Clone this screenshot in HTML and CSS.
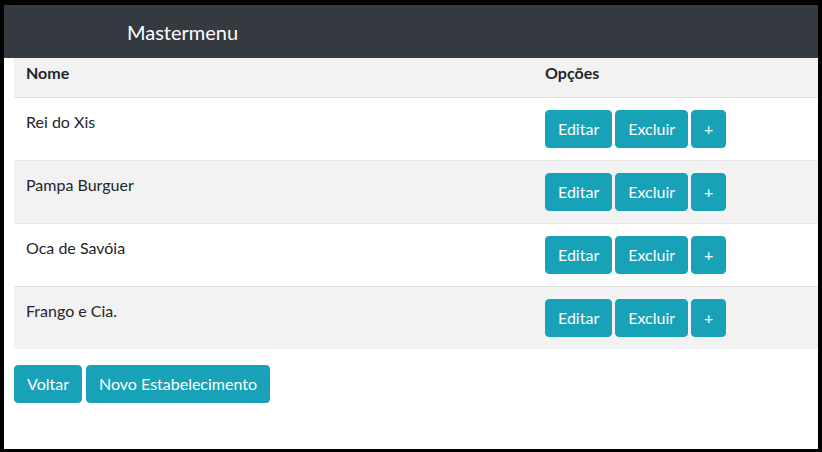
FILE: index.html
```html
<!DOCTYPE html>
<html lang="pt">
<head>
<meta charset="utf-8">
<title>Mastermenu</title>
<link rel="stylesheet" href="styles.css">
</head>
<body>
<div class="frame">
  <header class="navbar">
    <span class="brand">Mastermenu</span>
  </header>
  <main class="content">
    <table class="table">
      <thead>
        <tr><th class="col-name">Nome</th><th>Opções</th></tr>
      </thead>
      <tbody>
        <tr>
          <td>Rei do Xis</td>
          <td><div class="actions"><button class="btn">Editar</button><button class="btn">Excluir</button><button class="btn">+</button></div></td>
        </tr>
        <tr>
          <td>Pampa Burguer</td>
          <td><div class="actions"><button class="btn">Editar</button><button class="btn">Excluir</button><button class="btn">+</button></div></td>
        </tr>
        <tr>
          <td>Oca de Savóia</td>
          <td><div class="actions"><button class="btn">Editar</button><button class="btn">Excluir</button><button class="btn">+</button></div></td>
        </tr>
        <tr>
          <td>Frango e Cia.</td>
          <td><div class="actions"><button class="btn">Editar</button><button class="btn">Excluir</button><button class="btn">+</button></div></td>
        </tr>
      </tbody>
    </table>
    <div class="footer-actions">
      <button class="btn">Voltar</button>
      <button class="btn">Novo Estabelecimento</button>
    </div>
  </main>
</div>
</body>
</html>
```
FILE: styles.css
```css
html, body {
  margin: 0;
  padding: 0;
  background: #000;
}
body {
  font-family: Lato, "Liberation Sans", sans-serif;
  font-size: 16px;
  line-height: 24px;
  color: #212529;
}
.frame {
  box-sizing: border-box;
  width: 822px;
  height: 452px;
  border-style: solid;
  border-color: #000;
  border-width: 5px 4px 3px 4px;
  background: #fff;
  overflow: hidden;
}
.navbar {
  height: 53px;
  background: #343a40;
  display: flex;
  align-items: center;
  padding-left: 123px;
}
.brand {
  color: #fff;
  font-size: 20px;
  line-height: 30px;
}
.content {
  padding-left: 10px;
}
.table {
  width: 100%;
  border-collapse: collapse;
  margin-bottom: 16px;
}
.table th {
  text-align: left;
  font-weight: 700;
  padding: 3px 12px 12px;
  background: #f2f2f2;
  border-bottom: 1px solid #e4e4e4;
}
.col-name {
  width: 495px;
}
.table td {
  padding: 12px;
  vertical-align: top;
  border-top: 1px solid #e4e4e4;
}
.table tbody tr:nth-child(even) td {
  background: #f2f2f2;
}
.table thead + tbody tr:first-child td {
  border-top: 0;
}
.actions {
  display: flex;
  gap: 3px;
}
.btn {
  font-family: Lato, "Liberation Sans", sans-serif;
  font-size: 16px;
  line-height: 24px;
  color: #fff;
  background: #17a2b8;
  border: 1px solid #17a2b8;
  border-radius: 4px;
  padding: 6px 12px;
  cursor: pointer;
  margin: 0;
}
.footer-actions {
  display: flex;
  gap: 4px;
}
```
